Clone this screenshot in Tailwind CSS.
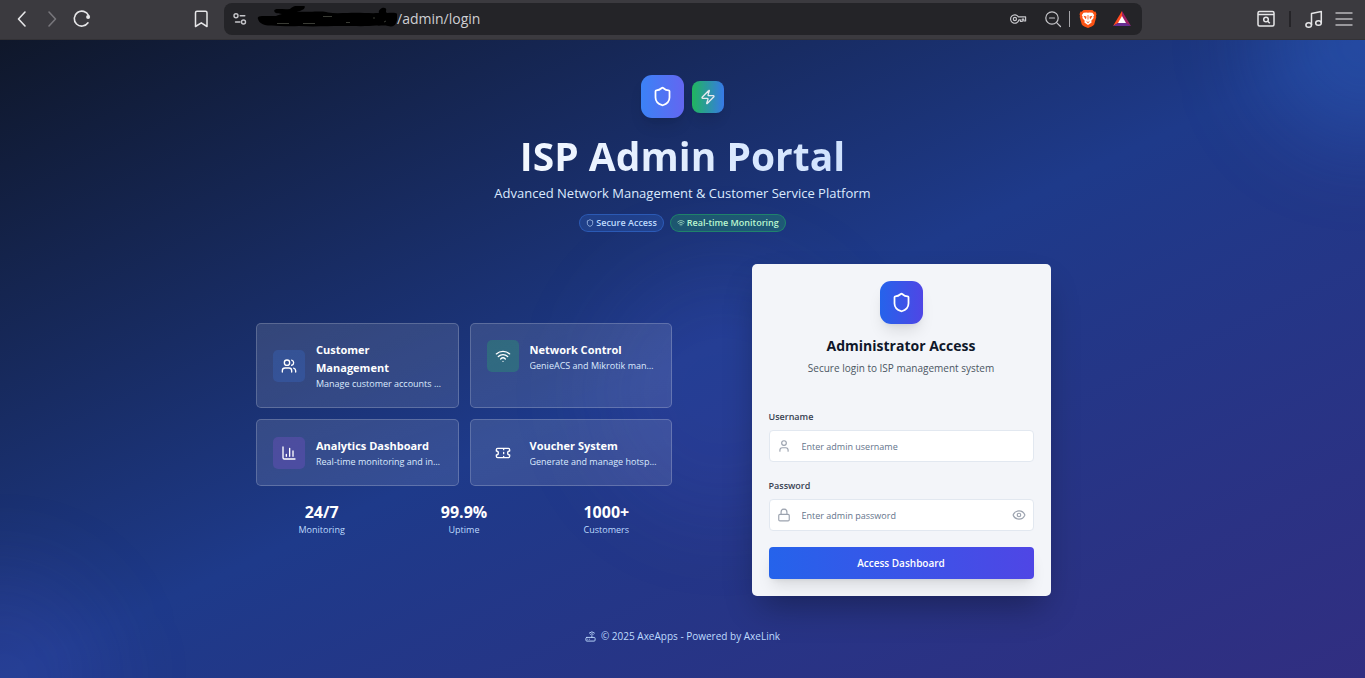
<!DOCTYPE html>
<html lang="en">
<head>
<meta charset="utf-8">
<meta name="viewport" content="width=device-width, initial-scale=1">
<title>ISP Admin Portal</title>
<script src="https://cdn.jsdelivr.net/npm/@tailwindcss/browser@4"></script>
</head>
<body class="min-h-screen flex flex-col font-['Open_Sans','Noto_Sans',sans-serif]">

<!-- Browser toolbar -->
<header class="h-10 shrink-0 flex items-center bg-[#3b3a3f] border-b border-[#333236] text-[#e6e6e8]">
  <nav class="w-[224px] shrink-0 flex items-center pl-3 pr-[13px] pb-px" aria-label="Browser navigation">
    <button class="w-5 h-5 mr-[10px]" aria-label="Back"><svg viewBox="0 0 20 20" class="size-5" fill="none" stroke="currentColor" stroke-width="1.6" stroke-linecap="round" stroke-linejoin="round"><path d="M13 3 6.500 10 13 17"/></svg></button>
    <button class="w-5 h-5 mr-[10px] text-[#77767b]" aria-label="Forward"><svg viewBox="0 0 20 20" class="size-5" fill="none" stroke="currentColor" stroke-width="1.600" stroke-linecap="round" stroke-linejoin="round"><path d="M7 3 13.500 10 7 17"/></svg></button>
    <button class="w-5 h-5" aria-label="Reload"><svg viewBox="0 0 20 20" class="size-5" fill="none" stroke="currentColor" stroke-width="1.600" stroke-linecap="round"><path d="M16 13.800A7.500 7.500 0 1 1 16.600 6.500"/><circle cx="16.100" cy="7.900" r="2" fill="currentColor" stroke="none"/></svg></button>
    <button class="w-5 h-5 ml-auto" aria-label="Bookmark"><svg viewBox="0 0 20 20" class="size-5" fill="none" stroke="currentColor" stroke-width="1.500" stroke-linejoin="round"><path d="M4.500 3.800a1.500 1.500 0 0 1 1.500-1.500h8.500a1.500 1.500 0 0 1 1.500 1.500V17.500l-5.700-3.700L4.500 17.500z"/></svg></button>
  </nav>
  <div class="flex-1 h-8 mb-[2px] flex items-center rounded-lg bg-[#242428] px-2 text-[#c6c6ca]">
    <button class="size-4 shrink-0" aria-label="Site settings"><svg viewBox="0 0 16 16" class="size-4" fill="none" stroke="currentColor" stroke-width="1.400" stroke-linecap="round"><circle cx="4" cy="4.700" r="2"/><path d="M8.200 4.700h4.600"/><circle cx="11.500" cy="11" r="2"/><path d="M3.500 11h4.500"/></svg></button>
    <svg viewBox="0 0 140 26" class="w-[140px] h-[26px] ml-[9px] shrink-0" fill="#000" aria-hidden="true"><path d="M1 13c-1-2 1-3 4-3h14c1-1 4-1 6-2-2-.5-5 0-7-1.500C16 4 18 3 21 3c4 0 8 .5 12 0C36 0 42-1.500 46-1c3 1 2 4-1 5-2 1-4 1.500-5 2 6-1 12 .5 18-.5 6 0 9-.5 13 1 6 1 13 .500 20 .5 11-.5 22 .5 31 0-1-2 1-4 3-5 3-1 5 .500 4 3 0 1 0 1.500 1 2 5 0 10-1 11 2 0 3-1 5-2 8-1 3-4 4-8 3-4-1-8 0-12-.5-9 1-20 .5-34 .5-16 0-29 1-43 0-10 .5-20 0-27-.5C9 20 2 18 1 13z"/><path d="M20 17.500h12M46 17.500h12M89 16.500h4M66 10.500h9M116 12h2M127 16l2-1" stroke="#8c8f80" stroke-width=".7" opacity=".6"/></svg>
    <span class="text-[14px] leading-5 text-[#cfcfd3] whitespace-nowrap">/admin/login</span>
    <div class="ml-auto flex items-center shrink-0">
      <button class="w-[18px] h-5 mr-4" aria-label="Passwords"><svg viewBox="0 0 18 20" class="w-[18px] h-5" fill="none" stroke="currentColor" stroke-width="1.200" stroke-linejoin="round"><path d="M9.400 7.900H16.600V12H14.800V10.200H13.200V12.500H11.400V10.900H9.900A4.200 4.200 0 1 1 9.400 7.900z"/><circle cx="5.900" cy="10" r="1.600"/></svg></button>
      <button class="size-5" aria-label="Zoom"><svg viewBox="0 0 20 20" class="size-5" fill="none" stroke="currentColor" stroke-width="1.200" stroke-linecap="round"><circle cx="9" cy="9" r="6.200"/><path d="M13.600 13.600 17.500 17.500M6.500 9h5"/></svg></button>
      <span class="w-px h-4 mx-[6px] bg-[#a5a5a9]"></span>
      <button class="w-6 h-5" aria-label="Brave Shields"><svg viewBox="0 0 24 20" class="w-6 h-5"><path d="M7.500 1h9l1.800 1.800 1.200-.2 1 2.700-.5 1.500.3 1.200-2.100 7.500c-.8 1.300-3.800 2.700-6.200 3.500-2.400-.8-5.400-2.200-6.200-3.500L3.700 8 4 6.800l-.5-1.500 1-2.700 1.200.2z" fill="#fb5314"/><path d="m12 3.800 1.500-.3 3 .3 1.700 2.400-.8 1.300.2 1.500-2.300 2.800.3 1.700L12 16l-3.600-2.500.3-1.700L6.400 9l.2-1.500-.8-1.300 1.700-2.400 3-.3z" fill="#fff"/><path d="m7.500 6.800 3 .7-.3 2-.8.600zM16.500 6.800l-3 .7.3 2 .8.600zM10 12l2 .9 2-.9-2 2.200zM11.600 6h.8v4.500h-.8z" fill="#fb5314"/></svg></button>
      <button class="size-5 ml-3 mr-[2px]" aria-label="Brave Rewards"><svg viewBox="0 0 20 20" class="size-5"><path d="M10 2 1 17l9-5z" fill="#ff4b20"/><path d="M10 2v7l4.500 6L19 17z" fill="#9e1f63"/><path d="M1 17h18l-5-3H6z" fill="#662d91"/><path d="m10 7 4 7H6z" fill="#fff"/></svg></button>
    </div>
  </div>
  <nav class="w-[223px] shrink-0 flex items-center justify-end pr-[11px] pb-px" aria-label="Browser tools">
    <button class="size-5" aria-label="Search tabs"><svg viewBox="0 0 20 20" class="size-5" fill="none" stroke="currentColor" stroke-width="1.500"><rect x="2" y="2.500" width="16" height="14.500" rx="1.500"/><path d="M2 5.500h16"/><circle cx="10" cy="10.500" r="2.300"/><path d="m11.800 12.300 2 2"/></svg></button>
    <span class="w-[2px] h-4 mx-[13px] bg-[#252428]"></span>
    <button class="size-5" aria-label="Media"><svg viewBox="0 0 20 20" class="size-5" fill="none" stroke="currentColor" stroke-width="1.500" stroke-linejoin="round"><ellipse cx="4.700" cy="16" rx="2.800" ry="2.300"/><ellipse cx="14.500" cy="14" rx="2.800" ry="2.300"/><path d="M7.500 16V4.500L17.300 2.500v11.500"/></svg></button>
    <button class="size-5 ml-[10px] text-[#b9b8bc]" aria-label="Menu"><svg viewBox="0 0 20 20" class="size-5" stroke="currentColor" stroke-width="1.600"><path d="M1.500 4h17M1.500 10h17M1.500 16h17"/></svg></button>
  </nav>
</header>

<main class="relative flex-1 overflow-hidden flex flex-col justify-center items-center px-5 pt-[21px] pb-5 bg-[linear-gradient(to_bottom_right,#0f172a,#1e3a8a,#312e81)] text-white">
  <!-- Soft glows behind the content -->
  <div class="absolute -top-[107px] -right-[107px] size-[213px] rounded-full bg-[#3b82f6]/22 blur-[43px]"></div>
  <div class="absolute -bottom-[107px] -left-[107px] size-[213px] rounded-full bg-[#6366f1]/12 blur-[43px]"></div>
  <div class="absolute top-[55%] left-[53%] -translate-1/2 size-[256px] rounded-full bg-[#6366f1]/10 blur-[43px]"></div>

  <div class="relative w-full max-w-[853px] flex flex-col">
    <section class="flex flex-col items-center text-center">
      <div class="flex items-center gap-2">
        <div class="size-[43px] flex items-center justify-center rounded-[11px] bg-[linear-gradient(to_right,#3b82f6,#6366f1)] shadow-lg">
          <svg viewBox="0 0 24 24" class="size-[21px]" fill="none" stroke="currentColor" stroke-width="2" stroke-linecap="round" stroke-linejoin="round"><path d="M20 13c0 5-3.500 7.500-7.660 8.950a1 1 0 0 1-.67-.01C7.500 20.500 4 18 4 13V6a1 1 0 0 1 1-1c2 0 4.500-1.200 6.240-2.720a1.170 1.170 0 0 1 1.520 0C14.510 3.810 17 5 19 5a1 1 0 0 1 1 1z"/></svg>
        </div>
        <div class="size-8 flex items-center justify-center rounded-lg bg-[linear-gradient(to_right,#22c55e,#3b82f6)] opacity-90 shadow-lg">
          <svg viewBox="0 0 24 24" class="size-4" fill="none" stroke="currentColor" stroke-width="2" stroke-linecap="round" stroke-linejoin="round"><path d="M4 14a1 1 0 0 1-.78-1.630l9.900-10.200a.5.5 0 0 1 .86.460l-1.920 6.020A1 1 0 0 0 13 10h7a1 1 0 0 1 .78 1.630l-9.900 10.200a.5.5 0 0 1-.86-.46l1.920-6.020A1 1 0 0 0 11 14z"/></svg>
        </div>
      </div>
      <h1 class="mt-4 text-[39px] leading-[44px] font-bold bg-[linear-gradient(to_right,#f3f8ff,#cfe2fe)] bg-clip-text text-transparent">ISP Admin Portal</h1>
      <p class="mt-[5px] text-[13px] leading-5 text-[#dbeafe]">Advanced Network Management &amp; Customer Service Platform</p>
      <div class="mt-[11px] flex gap-[6px] text-[9px] leading-4 font-semibold">
        <span class="flex items-center gap-[2px] px-[6px] rounded-full border border-[#3b82f6]/40 bg-[#3b82f6]/20 text-[#bfdbfe]">
          <svg viewBox="0 0 24 24" class="size-2" fill="none" stroke="currentColor" stroke-width="2" stroke-linejoin="round"><path d="M20 13c0 5-3.500 7.500-7.660 8.950a1 1 0 0 1-.67-.01C7.500 20.500 4 18 4 13V6a1 1 0 0 1 1-1c2 0 4.500-1.200 6.240-2.720a1.170 1.170 0 0 1 1.520 0C14.510 3.810 17 5 19 5a1 1 0 0 1 1 1z"/></svg>
          Secure Access</span>
        <span class="flex items-center gap-[2px] px-[6px] rounded-full border border-[#22c55e]/40 bg-[#22c55e]/25 text-[#bbf7d0]">
          <svg viewBox="0 0 24 24" class="size-2" fill="none" stroke="currentColor" stroke-width="2" stroke-linecap="round"><path d="M12 20h.01M2 8.820a15 15 0 0 1 20 0M5 12.859a10 10 0 0 1 14 0M8.500 16.429a5 5 0 0 1 7 0"/></svg>
          Real-time Monitoring</span>
      </div>
    </section>

    <div class="mt-8 grid grid-cols-1 lg:grid-cols-2 gap-[21px] items-center">
      <section>
        <div class="grid grid-cols-2 gap-[11px]">
          <article class="flex items-center gap-[11px] p-4 rounded-[5px] border border-white/20 bg-[linear-gradient(to_bottom_right,#ffffff1f,#ffffff1a)]">
            <div class="size-8 shrink-0 flex items-center justify-center rounded-[5px] bg-[#3b82f6]/20"><svg viewBox="0 0 24 24" class="size-4" fill="none" stroke="currentColor" stroke-width="2" stroke-linecap="round" stroke-linejoin="round"><path d="M16 21v-2a4 4 0 0 0-4-4H6a4 4 0 0 0-4 4v2"/><circle cx="9" cy="7" r="4"/><path d="M22 21v-2a4 4 0 0 0-3-3.870M16 3.130a4 4 0 0 1 0 7.750"/></svg></div>
            <div class="min-w-0 pt-px"><h3 class="text-[11px] leading-[18px] font-bold">Customer Management</h3><p class="text-[9px] leading-[14px] text-[#dbeafe] truncate">Manage customer accounts and billing</p></div>
          </article>
          <article class="flex items-start gap-[11px] p-4 rounded-[5px] border border-white/20 bg-[linear-gradient(to_bottom_right,#ffffff1f,#ffffff1a)]">
            <div class="size-8 shrink-0 flex items-center justify-center rounded-[5px] bg-[#22c55e]/25"><svg viewBox="0 0 24 24" class="size-4" fill="none" stroke="currentColor" stroke-width="2" stroke-linecap="round"><path d="M12 20h.01M2 8.820a15 15 0 0 1 20 0M5 12.859a10 10 0 0 1 14 0M8.500 16.429a5 5 0 0 1 7 0"/></svg></div>
            <div class="min-w-0 pt-px"><h3 class="text-[11px] leading-[18px] font-bold">Network Control</h3><p class="text-[9px] leading-[14px] text-[#dbeafe] truncate">GenieACS and Mikrotik management</p></div>
          </article>
          <article class="flex items-center gap-[11px] p-4 rounded-[5px] border border-white/20 bg-[linear-gradient(to_bottom_right,#ffffff1f,#ffffff1a)]">
            <div class="size-8 shrink-0 flex items-center justify-center rounded-[5px] bg-[#a855f7]/20"><svg viewBox="0 0 24 24" class="size-4" fill="none" stroke="currentColor" stroke-width="2" stroke-linecap="round" stroke-linejoin="round"><path d="M3 3v16a2 2 0 0 0 2 2h16M18 17V9M13 17V5M8 17v-3"/></svg></div>
            <div class="min-w-0 pt-px"><h3 class="text-[11px] leading-[18px] font-bold">Analytics Dashboard</h3><p class="text-[9px] leading-[14px] text-[#dbeafe] truncate">Real-time monitoring and insights</p></div>
          </article>
          <article class="flex items-center gap-[11px] p-4 rounded-[5px] border border-white/20 bg-[linear-gradient(to_bottom_right,#ffffff1f,#ffffff1a)]">
            <div class="size-8 shrink-0 flex items-center justify-center"><svg viewBox="0 0 24 24" class="size-4" fill="none" stroke="currentColor" stroke-width="2" stroke-linecap="round" stroke-linejoin="round"><path d="M2 9a3 3 0 0 1 0 6v2a2 2 0 0 0 2 2h16a2 2 0 0 0 2-2v-2a3 3 0 0 1 0-6V7a2 2 0 0 0-2-2H4a2 2 0 0 0-2 2ZM13 5v2M13 17v2M13 11v2"/></svg></div>
            <div class="min-w-0 pt-px"><h3 class="text-[11px] leading-[18px] font-bold">Voucher System</h3><p class="-mr-1 text-[9px] leading-[14px] text-[#dbeafe] truncate">Generate and manage hotspot vouchers</p></div>
          </article>
        </div>
        <dl class="mt-4 grid grid-cols-3 gap-[11px] text-center">
          <div class="flex flex-col-reverse"><dt class="text-[9px] leading-[14px] text-[#bfdbfe]">Monitoring</dt><dd class="text-[16px] leading-[21px] font-bold">24/7</dd></div>
          <div class="flex flex-col-reverse"><dt class="text-[9px] leading-[14px] text-[#bfdbfe]">Uptime</dt><dd class="text-[16px] leading-[21px] font-bold">99.9%</dd></div>
          <div class="flex flex-col-reverse"><dt class="text-[9px] leading-[14px] text-[#bfdbfe]">Customers</dt><dd class="text-[16px] leading-[21px] font-bold">1000+</dd></div>
        </dl>
      </section>

      <form class="w-full max-w-[299px] mx-auto p-[17px] rounded-[5px] bg-[#f3f5f9] text-[#0f172a] shadow-[0_17px_33px_-8px_#00000055]">
        <div class="flex flex-col items-center text-center">
          <div class="size-[43px] flex items-center justify-center rounded-[11px] bg-[linear-gradient(to_right,#2563eb,#4f46e5)] text-white shadow-lg">
            <svg viewBox="0 0 24 24" class="size-[21px]" fill="none" stroke="currentColor" stroke-width="2" stroke-linecap="round" stroke-linejoin="round"><path d="M20 13c0 5-3.500 7.500-7.660 8.950a1 1 0 0 1-.67-.01C7.500 20.500 4 18 4 13V6a1 1 0 0 1 1-1c2 0 4.500-1.200 6.240-2.720a1.170 1.170 0 0 1 1.520 0C14.510 3.810 17 5 19 5a1 1 0 0 1 1 1z"/></svg>
          </div>
          <h2 class="mt-[11px] text-[14px] leading-[21px] font-bold">Administrator Access</h2>
          <p class="mt-[4px] text-[10px] leading-4 text-[#4b5563]">Secure login to ISP management system</p>
        </div>
        <label for="username" class="block mt-[34px] text-[9px] leading-[14px] font-semibold text-[#374151]">Username</label>
        <div class="relative mt-[6px]">
          <input id="username" type="text" placeholder="Enter admin username" class="block w-full h-8 pl-8 pr-3 rounded-[4px] border border-[#e2e8f0] bg-white text-[9px] placeholder:text-[#64748b]">
          <svg viewBox="0 0 24 24" class="absolute left-2 top-[9px] size-[14px] text-[#9ca3af]" fill="none" stroke="currentColor" stroke-width="2" stroke-linecap="round" stroke-linejoin="round"><path d="M19 21v-2a4 4 0 0 0-4-4H9a4 4 0 0 0-4 4v2"/><circle cx="12" cy="7" r="4"/></svg>
        </div>
        <label for="password" class="block mt-[17px] text-[9px] leading-[14px] font-semibold text-[#374151]">Password</label>
        <div class="relative mt-[6px]">
          <input id="password" type="password" placeholder="Enter admin password" class="block w-full h-8 pl-8 pr-8 rounded-[4px] border border-[#e2e8f0] bg-white text-[9px] placeholder:text-[#64748b]">
          <svg viewBox="0 0 24 24" class="absolute left-2 top-[9px] size-[14px] text-[#9ca3af]" fill="none" stroke="currentColor" stroke-width="2" stroke-linecap="round" stroke-linejoin="round"><rect x="3" y="11" width="18" height="11" rx="2"/><path d="M7 11V7a5 5 0 0 1 10 0v4"/></svg>
          <button type="button" aria-label="Show password" class="absolute right-2 top-[9px] size-[14px] text-[#9ca3af]"><svg viewBox="0 0 24 24" class="size-[14px]" fill="none" stroke="currentColor" stroke-width="2" stroke-linecap="round" stroke-linejoin="round"><path d="M2.062 12.348a1 1 0 0 1 0-.696 10.750 10.750 0 0 1 19.876 0 1 1 0 0 1 0 .696 10.750 10.750 0 0 1-19.876 0"/><circle cx="12" cy="12" r="3"/></svg></button>
        </div>
        <button type="submit" class="block w-full h-8 mt-4 rounded-[4px] bg-[linear-gradient(to_right,#2563eb,#4f46e5)] text-white text-[10px] font-semibold shadow-lg">Access Dashboard</button>
      </form>
    </div>

    <footer class="mt-8 flex items-center justify-center gap-[5px] text-[10px] leading-4 text-[#bfdbfe]">
      <svg viewBox="0 0 24 24" class="size-[11px]" fill="none" stroke="currentColor" stroke-width="2" stroke-linecap="round" stroke-linejoin="round"><rect x="2" y="14" width="20" height="8" rx="2"/><path d="M6.010 18H6M10.010 18H10M15 10v4M17.840 7.170a4 4 0 0 0-5.660 0M20.660 4.340a8 8 0 0 0-11.310 0"/></svg>
      <span>© 2025 AxeApps - Powered by AxeLink</span>
    </footer>
  </div>
</main>
</body>
</html>
